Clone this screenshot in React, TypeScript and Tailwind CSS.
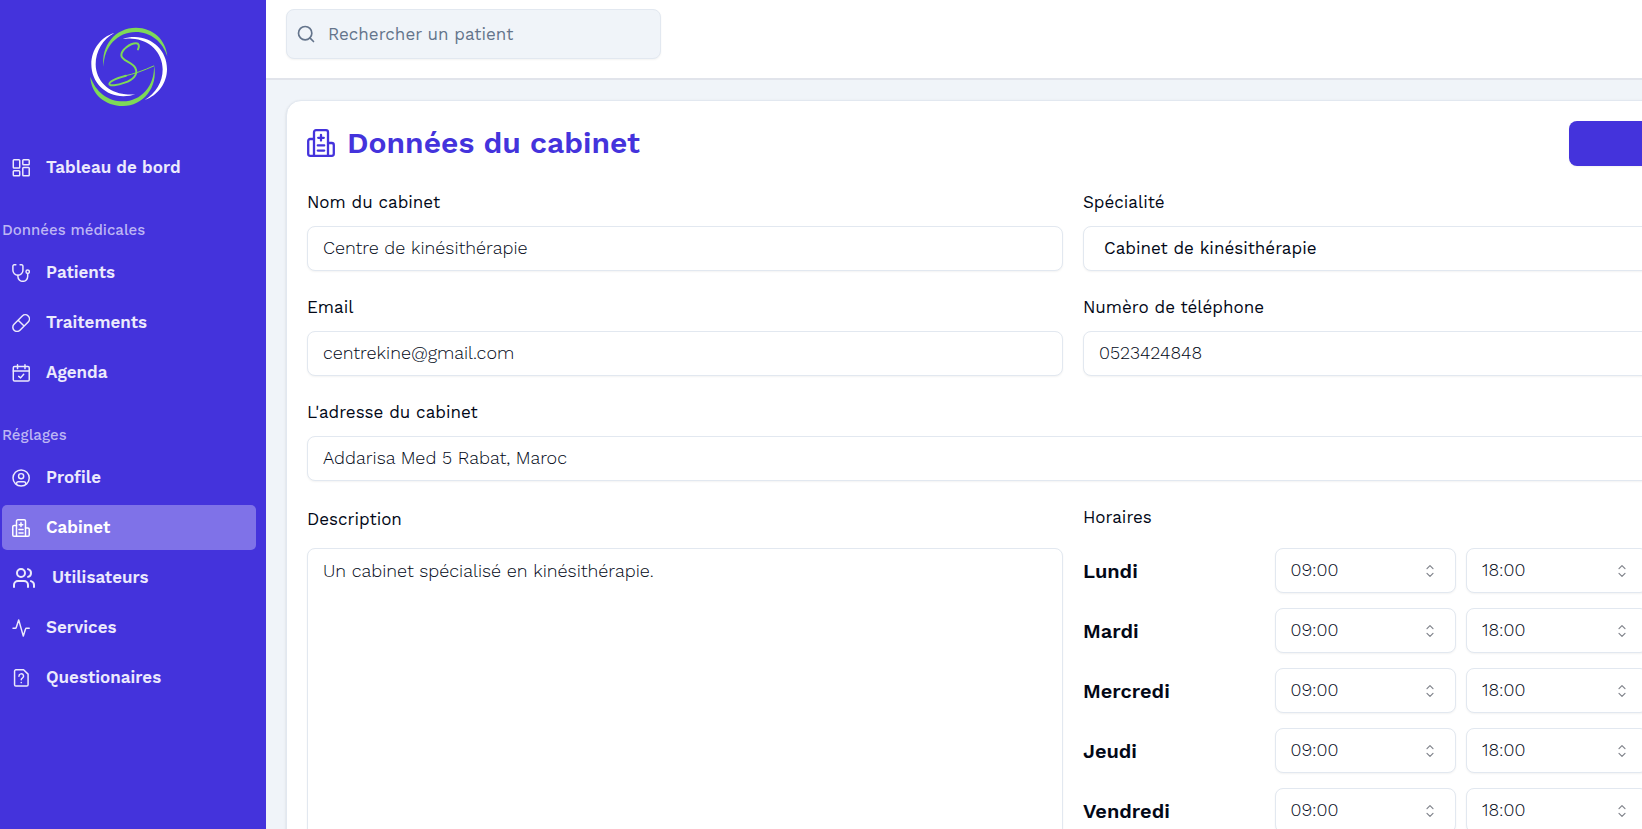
import React, { useId } from "react";
import { Search, Users } from "lucide-react";

type IconProps = { className?: string };

const smallStroke = {
  viewBox: "0 0 14 14",
  fill: "none",
  stroke: "currentColor",
  strokeWidth: 1.15,
  strokeLinecap: "round" as const,
  strokeLinejoin: "round" as const,
  "aria-hidden": true,
};

function DashboardIcon({ className }: IconProps) {
  return (
    <svg {...smallStroke} className={className}>
      <rect x="1" y="0.600" width="5" height="6.400" rx="0.600" />
      <rect x="8.400" y="0.600" width="5" height="3.800" rx="0.600" />
      <rect x="1" y="9.200" width="5" height="3.800" rx="0.600" />
      <rect x="8.400" y="6.600" width="5" height="6.400" rx="0.600" />
    </svg>
  );
}

function StethoscopeIcon({ className }: IconProps) {
  return (
    <svg {...smallStroke} className={className}>
      <path d="M3 .6H1.700a1 1 0 0 0-1 1v3.200a3.900 3.900 0 0 0 7.800 0V1.600a1 1 0 0 0-1-1H6.300" />
      <path d="M4.600 8.700v1a3.800 3.800 0 0 0 7.600 0V7.300" />
      <circle cx="12.200" cy="6" r="1.300" />
    </svg>
  );
}

function PillIcon({ className }: IconProps) {
  return (
    <svg {...smallStroke} className={className}>
      <path d="M1.600 12.600a3.250 3.250 0 0 1 0-4.600L8 1.600a3.250 3.250 0 0 1 4.600 4.600l-6.400 6.400a3.250 3.250 0 0 1-4.600 0zM4.800 4.800l4.600 4.600" />
    </svg>
  );
}

function CalendarIcon({ className }: IconProps) {
  return (
    <svg {...smallStroke} className={className}>
      <rect x="1" y="2" width="12.400" height="11.300" rx="1" />
      <path d="M1 5.500h12.400M4.300.6v3M10.100.6v3M5.200 9.600l1.500 1.200 2.400-2.800" />
    </svg>
  );
}

function ProfileIcon({ className }: IconProps) {
  return (
    <svg {...smallStroke} className={className}>
      <circle cx="7.100" cy="7" r="6.300" />
      <circle cx="7.100" cy="5.600" r="2" />
      <path d="M3.500 12.100v-.6A1.500 1.500 0 0 1 5 10h4.200a1.500 1.500 0 0 1 1.500 1.500v.6" />
    </svg>
  );
}

function ClinicIcon({ className }: IconProps) {
  return (
    <svg {...smallStroke} className={className}>
      <path d="M3.500 13.400V1.600a1 1 0 0 1 1-1h5a1 1 0 0 1 1 1v11.800" />
      <path d="M3.500 5H1.600a1 1 0 0 0-1 1v6.400a1 1 0 0 0 1 1h10.800a1 1 0 0 0 1-1V8a1 1 0 0 0-1-1h-1.900" />
      <path d="M7 3v2.800M5.600 4.400h2.800M5.400 8.200h3.200M5.400 10.800h3.200" />
    </svg>
  );
}

function ActivityIcon({ className }: IconProps) {
  return (
    <svg {...smallStroke} className={className}>
      <path d="M.8 7.200h1.700a.8.8 0 0 0 .8-.6L5.200.7l3.600 12.600 1.700-5.500a.8.8 0 0 1 .8-.6h2.100" />
    </svg>
  );
}

function QuestionIcon({ className }: IconProps) {
  return (
    <svg {...smallStroke} className={className}>
      <path d="M9 .6H3a1 1 0 0 0-1 1v10.700a1 1 0 0 0 1 1h8.500a1 1 0 0 0 1-1V4z" />
      <path d="M5.400 5.600a1.800 1.800 0 1 1 2.700 1.500c-.6.4-.9.700-.9 1.300M7.200 10.500v.1" />
    </svg>
  );
}

function CaretSort({ className }: IconProps) {
  return (
    <svg
      viewBox="0 0 15 15"
      fill="none"
      stroke="currentColor"
      strokeWidth="0.9"
      strokeLinecap="round"
      strokeLinejoin="round"
      aria-hidden
      className={className}
    >
      <path d="M5.250 5.750 7.500 3.500l2.250 2.250M5.250 9.250l2.250 2.250 2.250-2.250" />
    </svg>
  );
}

function Logo() {
  return (
    <svg viewBox="0 0 300 300" className="size-[100px]" role="img" aria-label="Logo">
      <path fill="#ffffff" d="M103 54C62 66 34 104 34 148c0 54 42 96 96 96 14 0 26-2 36-6-10 1-20 1-30 0-50-4-89-42-89-90 0-40 22-76 56-94z" />
      <path fill="#ffffff" d="M128 72c12-4 24-6 36-6 54 0 97 42 97 96 0 42-27 79-67 93 34-20 54-54 54-92 0-50-40-90-92-92-10-1-19-1-28 1z" />
      <path fill="#7ed957" d="M71 155C62 92 106 38 168 38c50 0 90 36 94 86-14-44-50-73-95-73-54 0-96 44-96 104z" />
      <path fill="#7ed957" d="M222 150c14 68-34 123-93 123-54 0-96-36-98-88 16 45 52 74 98 74 54 0 96-46 93-109z" />
      <path
        fill="none"
        stroke="#7ed957"
        strokeLinecap="round"
        strokeLinejoin="round"
        strokeWidth="6"
        d="M174 103c5-10 3-18-6-18-18 0-44 20-44 36 0 17 32 19 42 38 10 20-8 36-32 44-22 8-46 11-46 4 0-8 24-18 50-25"
      />
      <path fill="none" stroke="#7ed957" strokeLinecap="round" strokeWidth="3" d="M134 183c30-7 56-16 87-30" />
    </svg>
  );
}

type NavItemProps = {
  icon: React.ReactNode;
  label: string;
  active?: boolean;
};

function NavItem({ icon, label, active }: NavItemProps) {
  return (
    <li>
      <a
        href="#"
        aria-current={active ? "page" : undefined}
        className={
          active
            ? "flex h-[45px] items-center gap-4 rounded-[5px] bg-[#7f72e8] px-[10px] text-[17px] font-semibold text-white"
            : "flex h-[45px] items-center gap-4 rounded-[5px] px-[10px] text-[17px] font-semibold text-[#eceafc]"
        }
      >
        {icon}
        {label}
      </a>
    </li>
  );
}

function NavSection({ title, children }: { title?: string; children: React.ReactNode }) {
  return (
    <section className="flex flex-col gap-[10px]">
      {title && <h2 className="text-[15px] leading-5 font-medium text-[#bdb6f4]">{title}</h2>}
      <ul className="flex flex-col gap-[5px]">{children}</ul>
    </section>
  );
}

function Sidebar() {
  const icon = "size-[18px] shrink-0";
  return (
    <aside className="flex w-[266px] shrink-0 flex-col bg-[#4433dc]">
      <div className="flex h-[145px] justify-center pt-[15px] pr-[6px]">
        <Logo />
      </div>
      <nav className="flex flex-col gap-[30px] pr-[10px] pl-[2px]">
        <NavSection>
          <NavItem icon={<DashboardIcon className={icon} />} label="Tableau de bord" />
        </NavSection>
        <NavSection title="Données médicales">
          <NavItem icon={<StethoscopeIcon className={icon} />} label="Patients" />
          <NavItem icon={<PillIcon className={icon} />} label="Traitements" />
          <NavItem icon={<CalendarIcon className={icon} />} label="Agenda" />
        </NavSection>
        <NavSection title="Réglages">
          <NavItem icon={<ProfileIcon className={icon} />} label="Profile" />
          <NavItem icon={<ClinicIcon className={icon} />} label="Cabinet" active />
          <NavItem icon={<Users className="size-6 shrink-0" />} label="Utilisateurs" />
          <NavItem icon={<ActivityIcon className={icon} />} label="Services" />
          <NavItem icon={<QuestionIcon className={icon} />} label="Questionaires" />
        </NavSection>
      </nav>
    </aside>
  );
}

const control =
  "h-[45px] w-full rounded-[8px] border border-[#e2e8f0] bg-white px-[15px] pb-[2px] text-[18px] font-light text-[#020817] shadow-xs outline-none";
const labelText = "text-[17px] leading-[27px] text-[#020817]";

type FieldProps = { label: string; value: string; type?: string; className?: string };

function Field({ label, value, type = "text", className = "" }: FieldProps) {
  const id = useId();
  return (
    <div className={`flex flex-col gap-[10px] ${className}`}>
      <label htmlFor={id} className={labelText}>
        {label}
      </label>
      <input id={id} type={type} defaultValue={value} className={control} />
    </div>
  );
}

function TimeSelect({ value, label }: { value: string; label: string }) {
  return (
    <div className="relative">
      <select aria-label={label} defaultValue={value} className={`${control} appearance-none`}>
        <option>{value}</option>
      </select>
      <CaretSort className="pointer-events-none absolute top-[13px] right-4 size-5 text-[#80838b]" />
    </div>
  );
}

const days = ["Lundi", "Mardi", "Mercredi", "Jeudi", "Vendredi", "Samedi", "Dimanche"];

function CabinetForm() {
  return (
    <form className="-mr-[238px] rounded-[15px] border border-[#e2e8f0] bg-white p-5 shadow-sm">
      <header className="mb-[23px] flex h-[45px] items-center justify-between">
        <h1 className="flex items-center gap-3 pb-[2px] text-[30px] leading-[43px] font-semibold text-[#4433dc]">
          <ClinicIcon className="size-7" />
          Données du cabinet
        </h1>
        <button
          type="submit"
          aria-label="Enregistrer"
          className="h-full w-[270px] rounded-[8px] bg-[#4433dc] shadow-xs"
        />
      </header>
      <div className="grid grid-cols-2 gap-x-5 gap-y-[23px]">
        <Field label="Nom du cabinet" value="Centre de kinésithérapie" />
        <div className="flex flex-col gap-[10px]">
          <label htmlFor="specialite" className={labelText}>
            Spécialité
          </label>
          <select
            id="specialite"
            defaultValue="Cabinet de kinésithérapie"
            className="h-[45px] w-full appearance-none rounded-[8px] border border-[#e2e8f0] bg-white px-5 text-[17px] text-[#020817] shadow-xs outline-none"
          >
            <option>Cabinet de kinésithérapie</option>
          </select>
        </div>
        <Field label="Email" type="email" value="centrekine@gmail.com" />
        <Field label="Numèro de téléphone" type="tel" value="0523424848" />
        <Field label="L'adresse du cabinet" value="Addarisa Med 5 Rabat, Maroc" className="col-span-2" />
        <div className="flex flex-col gap-[15px] pt-[2px]">
          <label htmlFor="description" className={labelText}>
            Description
          </label>
          <textarea
            id="description"
            defaultValue="Un cabinet spécialisé en kinésithérapie."
            className="w-full flex-1 resize-none rounded-[8px] border border-[#e2e8f0] bg-white px-[15px] py-2 text-[18px] leading-[27px] font-light text-[#020817] shadow-xs outline-none"
          />
        </div>
        <fieldset>
          <legend className={`mb-[17px] ${labelText}`}>Horaires</legend>
          <div className="flex flex-col gap-[15px]">
            {days.map((day) => (
              <div key={day} className="grid grid-cols-4 items-center gap-[10px]">
                <span className="text-[20px] leading-[30px] font-semibold text-[#020817]">{day}</span>
                <TimeSelect value="09:00" label={`${day} ouverture`} />
                <TimeSelect value="18:00" label={`${day} fermeture`} />
              </div>
            ))}
          </div>
        </fieldset>
      </div>
    </form>
  );
}

export default function App() {
  return (
    <div className="flex h-screen overflow-hidden bg-[#f0f4f9] font-['Work_Sans',Inter,sans-serif]">
      <Sidebar />
      <div className="flex min-w-0 flex-1 flex-col">
        <header className="h-20 shrink-0 border-b-2 border-[#e1e4eb] bg-white px-5 pt-[9px]">
          <label className="flex h-[50px] w-[375px] items-center gap-3 rounded-[8px] border border-[#e2e8f0] bg-[#f0f4f9] px-[9px] text-[#64748b] shadow-xs">
            <Search className="size-5 shrink-0" strokeWidth={2} />
            <input
              type="search"
              aria-label="Rechercher un patient"
              placeholder="Rechercher un patient"
              className="min-w-0 flex-1 bg-transparent pt-[2px] text-[17px] outline-none placeholder:text-[#64748b]"
            />
          </label>
        </header>
        <main className="min-h-0 flex-1 overflow-hidden px-5 pt-5">
          <CabinetForm />
        </main>
      </div>
    </div>
  );
}
